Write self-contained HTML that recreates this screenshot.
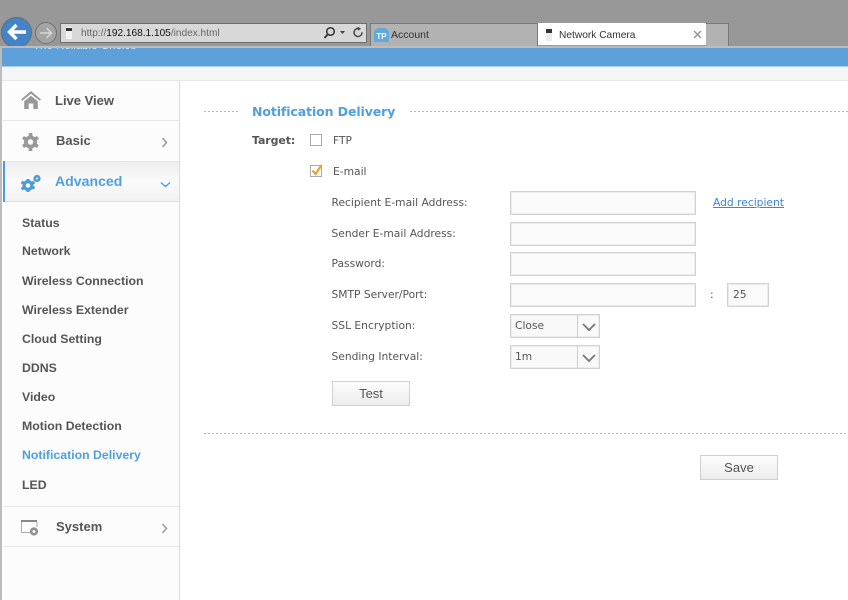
<!DOCTYPE html>
<html><head><meta charset="utf-8"><title>Network Camera</title>
<style>
html,body{margin:0;padding:0}
body{width:848px;height:600px;position:relative;overflow:hidden;background:#fff;font-family:"Liberation Sans",sans-serif}
#w{left:0;top:0;width:848px;height:600px;overflow:hidden;filter:blur(.35px);background:#fff}
div,span,a,svg{position:absolute;display:block;box-sizing:border-box;white-space:nowrap}
.nav{font:bold 13px/16px "Liberation Sans",sans-serif;color:#555}
.sub{font:bold 12.3px/16px "Liberation Sans",sans-serif;color:#555;left:22px}
.lb{font:10.7px/14px "DejaVu Sans",sans-serif;color:#555}
.in{background:#fafafa;border:1px solid #d2d2d2;box-shadow:inset 0 0 0 1px #ececec;height:24px}
.hr{height:1px;background:#e6e6e6;left:3px;width:176px}
.dash{background:repeating-linear-gradient(90deg,#b8b8b8 0 2px,transparent 2px 4px);height:1px}
.btn{background:linear-gradient(#fdfdfd,#ececec);border:1px solid #d0d0d0;font:13px/23px "Liberation Sans",sans-serif;color:#555;text-align:center;height:25px;width:78px}
</style></head><body><div id="w">

<!-- browser chrome -->
<div style="left:0;top:0;width:848px;height:47px;background:#989898"></div>
<div style="left:1px;top:17px;width:31px;height:31px;border-radius:50%;background:#4384c8;border:1px solid #6a6a6a"></div>
<svg style="left:7px;top:23px" width="20" height="18" viewBox="0 0 20 18"><path d="M9.500 2 2.500 9l7 7M3 9h16" fill="none" stroke="#fff" stroke-width="3.400"/></svg>
<div style="left:35px;top:22px;width:22px;height:22px;border-radius:50%;background:#a4a4a4;border:1px solid #707070"></div>
<svg style="left:39px;top:26px" width="14" height="14" viewBox="0 0 14 14"><path d="M7.500 2l5 5-5 5M1 7h11" fill="none" stroke="#d8d8d8" stroke-width="1.400"/></svg>
<div style="left:60px;top:23px;width:307px;height:20px;background:#d8d8d8;border:1px solid #6e6e6e"></div>
<div style="left:66px;top:27px;width:6px;height:12px;background:#f2f2f2"></div>
<div style="left:66px;top:28px;width:6px;height:3px;background:#333"></div>
<div style="left:81px;top:27px;font:10.100px/14px 'Liberation Sans',sans-serif;color:#666">http://<b style="font-weight:normal;color:#111;position:static;display:inline">192.168.1.105</b>/index.html</div>
<svg style="left:323px;top:26px" width="42" height="14" viewBox="0 0 42 14"><circle cx="7.500" cy="5.500" r="3.800" fill="none" stroke="#333" stroke-width="1.500"/><path d="M4.500 8.500 1.500 12" stroke="#333" stroke-width="1.800"/><path d="M17 5h5l-2.500 3z" fill="#444"/><path d="M36.500 2.800a4 4 0 1 0 2.500 3.500" fill="none" stroke="#444" stroke-width="1.400"/><path d="M34.500 0.500l3.500 2.300-3 1.800z" fill="#444"/></svg>

<div style="left:370px;top:23px;width:168px;height:23px;background:#b2b2b2;border:1px solid #7a7a7a;border-bottom:0"></div>
<div style="left:374px;top:28px;width:15px;height:14px;background:#5ea9e0;border-radius:5px 5px 1px 1px;color:#fff;font:bold 8px/18px 'Liberation Sans',sans-serif;text-align:center">TP</div>
<div style="left:391px;top:28px;font:10.500px/14px 'Liberation Sans',sans-serif;color:#333">Account</div>
<div style="left:538px;top:23px;width:168px;height:23px;background:#fff;border-bottom:1px solid #999"></div>
<div style="left:546px;top:29px;width:6px;height:12px;background:#ececec"></div>
<div style="left:546px;top:29px;width:6px;height:4px;background:#333"></div>
<div style="left:559px;top:28.500px;font:10.200px/14px 'Liberation Sans',sans-serif;color:#333">Network Camera</div>
<svg style="left:693px;top:30px" width="9" height="9" viewBox="0 0 9 9"><path d="M1 1l7 7M8 1 1 8" stroke="#999" stroke-width="1.500"/></svg>
<div style="left:706px;top:23px;width:23px;height:23px;background:#b2b2b2;border:1px solid #7a7a7a;border-left:0;border-bottom:0"></div>

<!-- page header -->
<div style="left:0;top:46px;width:848px;height:2px;background:#bcbcbc"></div>
<div style="left:0;top:47px;width:2px;height:553px;background:#bdbdbd"></div>
<div style="left:2px;top:48px;width:846px;height:19px;background:#5da0da;border-bottom:1px solid #a5cdec;overflow:hidden"><div style="left:31px;top:-8px;font:11.500px/13px 'Liberation Sans',sans-serif;color:#dcebf7">The Reliable Choice</div></div>
<div style="left:2px;top:67px;width:846px;height:14px;background:#f5f5f5;border-bottom:1px solid #e6e6e6"></div>

<!-- sidebar -->
<div style="left:2px;top:81px;width:178px;height:519px;background:#fcfcfc;border-right:1px solid #dcdcdc"></div>
<svg style="left:21px;top:91px" width="20" height="18" viewBox="0 0 20 18"><path d="M10 0 0 8.500l1.300 1.200L10 2.800l8.700 6.900L20 8.500zM3.200 10.300 10 4.800l6.800 5.500V18h-4.500v-5.500H7.700V18H3.200z" fill="#999"/></svg>
<div class="nav" style="left:55px;top:93px">Live View</div>
<div class="hr" style="top:120px"></div>
<svg style="left:22px;top:133px" width="17" height="18" viewBox="0 0 17 18"><path d="M8.500 0v3M8.500 15v3M1 4.500l2.600 1.500M13.400 12l2.600 1.500M1 13.500 3.600 12M13.400 6 16 4.500" stroke="#999" stroke-width="3.600"/><circle cx="8.500" cy="9" r="4.600" fill="none" stroke="#999" stroke-width="3.800"/></svg>
<div class="nav" style="left:56px;top:133px">Basic</div>
<svg style="left:161px;top:137px" width="7" height="11" viewBox="0 0 7 11"><path d="M1.500 1l4 4.500-4 4.500" fill="none" stroke="#999" stroke-width="1.500"/></svg>
<div style="left:3px;top:161px;width:176px;height:41px;background:linear-gradient(#ededed,#fafafa 50%,#f2f2f2);border-top:1px solid #e4e4e4;border-bottom:1px solid #dedede"></div>
<div style="left:3px;top:161px;width:2px;height:41px;background:#4d9ce0"></div>
<svg style="left:20px;top:174px" width="21" height="19" viewBox="0 0 21 19"><path d="M8 5v3M8 15v3M1.500 8l2.500 1.300M12 13l2.500 1.300M1.500 15 4 13.700M12 9.300 14.500 8" stroke="#4a9bdc" stroke-width="3"/><circle cx="8" cy="11.500" r="3.900" fill="none" stroke="#4a9bdc" stroke-width="3.200"/><circle cx="17" cy="4.500" r="2.300" fill="none" stroke="#4a9bdc" stroke-width="2.600"/></svg>
<div style="left:55px;top:172px;font:bold 14.100px/18px 'Liberation Sans',sans-serif;color:#4d9fe0">Advanced</div>
<svg style="left:160px;top:181px" width="11" height="7" viewBox="0 0 11 7"><path d="M1 1.500l4.500 4 4.500-4" fill="none" stroke="#4d9fe0" stroke-width="1.500"/></svg>

<div class="sub" style="top:215px">Status</div>
<div class="sub" style="top:243px">Network</div>
<div class="sub" style="top:273px">Wireless Connection</div>
<div class="sub" style="top:302px">Wireless Extender</div>
<div class="sub" style="top:331px">Cloud Setting</div>
<div class="sub" style="top:360px">DDNS</div>
<div class="sub" style="top:389px">Video</div>
<div class="sub" style="top:418px">Motion Detection</div>
<div class="sub" style="top:447px;color:#4d9fe0">Notification Delivery</div>
<div class="sub" style="top:477px">LED</div>
<div class="hr" style="top:506px"></div>
<svg style="left:20px;top:519px" width="20" height="17" viewBox="0 0 20 17"><path d="M1 1h16v2H1z" fill="#888"/><path d="M1.500 3v10.500h9M17 3v5" fill="none" stroke="#aaa" stroke-width="1"/><circle cx="14" cy="12.500" r="2.800" fill="none" stroke="#8f8f8f" stroke-width="2.600"/></svg>
<div class="nav" style="left:56px;top:519px">System</div>
<svg style="left:161px;top:523px" width="7" height="11" viewBox="0 0 7 11"><path d="M1.500 1l4 4.500-4 4.500" fill="none" stroke="#999" stroke-width="1.500"/></svg>
<div class="hr" style="top:546px"></div>

<!-- content -->
<div class="dash" style="left:204px;top:111px;width:36px"></div>
<div style="left:252px;top:103px;font:bold 12.500px/17px 'DejaVu Sans',sans-serif;color:#4d9fe0;letter-spacing:-.1px">Notification Delivery</div>
<div class="dash" style="left:410px;top:111px;width:438px"></div>

<div class="lb" style="left:252px;top:134px;font-weight:bold;letter-spacing:-.1px;font-size:11px">Target:</div>
<div style="left:310px;top:134px;width:12px;height:12px;border:1px solid #aaa;background:#fff"></div>
<div class="lb" style="left:333px;top:134px">FTP</div>
<div style="left:310px;top:165px;width:12px;height:12px;border:1px solid #aaa;background:#fff"></div>
<svg style="left:310px;top:163px" width="14" height="14" viewBox="0 0 14 14"><path d="M2.500 7.500l3 3.500 6-9" fill="none" stroke="#eda12c" stroke-width="2.200"/></svg>
<div class="lb" style="left:333px;top:165px">E-mail</div>

<div class="lb" style="left:331.500px;top:196px">Recipient E-mail Address:</div>
<div class="in" style="left:510px;top:191px;width:186px"></div>
<a href="#" style="left:713px;top:196px;font:10.700px/14px 'DejaVu Sans',sans-serif;color:#3f80e0;text-decoration:underline">Add recipient</a>
<div class="lb" style="left:331.500px;top:227px">Sender E-mail Address:</div>
<div class="in" style="left:510px;top:222px;width:186px"></div>
<div class="lb" style="left:331.500px;top:257px">Password:</div>
<div class="in" style="left:510px;top:252px;width:186px"></div>
<div class="lb" style="left:331.500px;top:288px">SMTP Server/Port:</div>
<div class="in" style="left:510px;top:283px;width:186px"></div>
<div class="lb" style="left:710px;top:288px">:</div>
<div class="in lb" style="left:727px;top:283px;width:42px;padding:4px 0 0 5px">25</div>
<div class="lb" style="left:331.500px;top:319px">SSL Encryption:</div>
<div class="in lb" style="left:510px;top:314px;width:90px;padding:4px 0 0 4px;background:#f9f9f9">Close</div>
<div style="left:577px;top:315px;width:1px;height:22px;background:#ccc"></div>
<svg style="left:582px;top:323px" width="14" height="8" viewBox="0 0 14 8"><path d="M1 1l6 6 6-6" fill="none" stroke="#777" stroke-width="1.800"/></svg>
<div class="lb" style="left:331.500px;top:350px">Sending Interval:</div>
<div class="in lb" style="left:510px;top:345px;width:90px;padding:4px 0 0 4px;background:#f9f9f9">1m</div>
<div style="left:577px;top:346px;width:1px;height:22px;background:#ccc"></div>
<svg style="left:582px;top:354px" width="14" height="8" viewBox="0 0 14 8"><path d="M1 1l6 6 6-6" fill="none" stroke="#777" stroke-width="1.800"/></svg>

<div class="btn" style="left:332px;top:381px">Test</div>
<div class="dash" style="left:204px;top:433px;width:644px"></div>
<div class="btn" style="left:700px;top:455px">Save</div>
</div></body></html>
